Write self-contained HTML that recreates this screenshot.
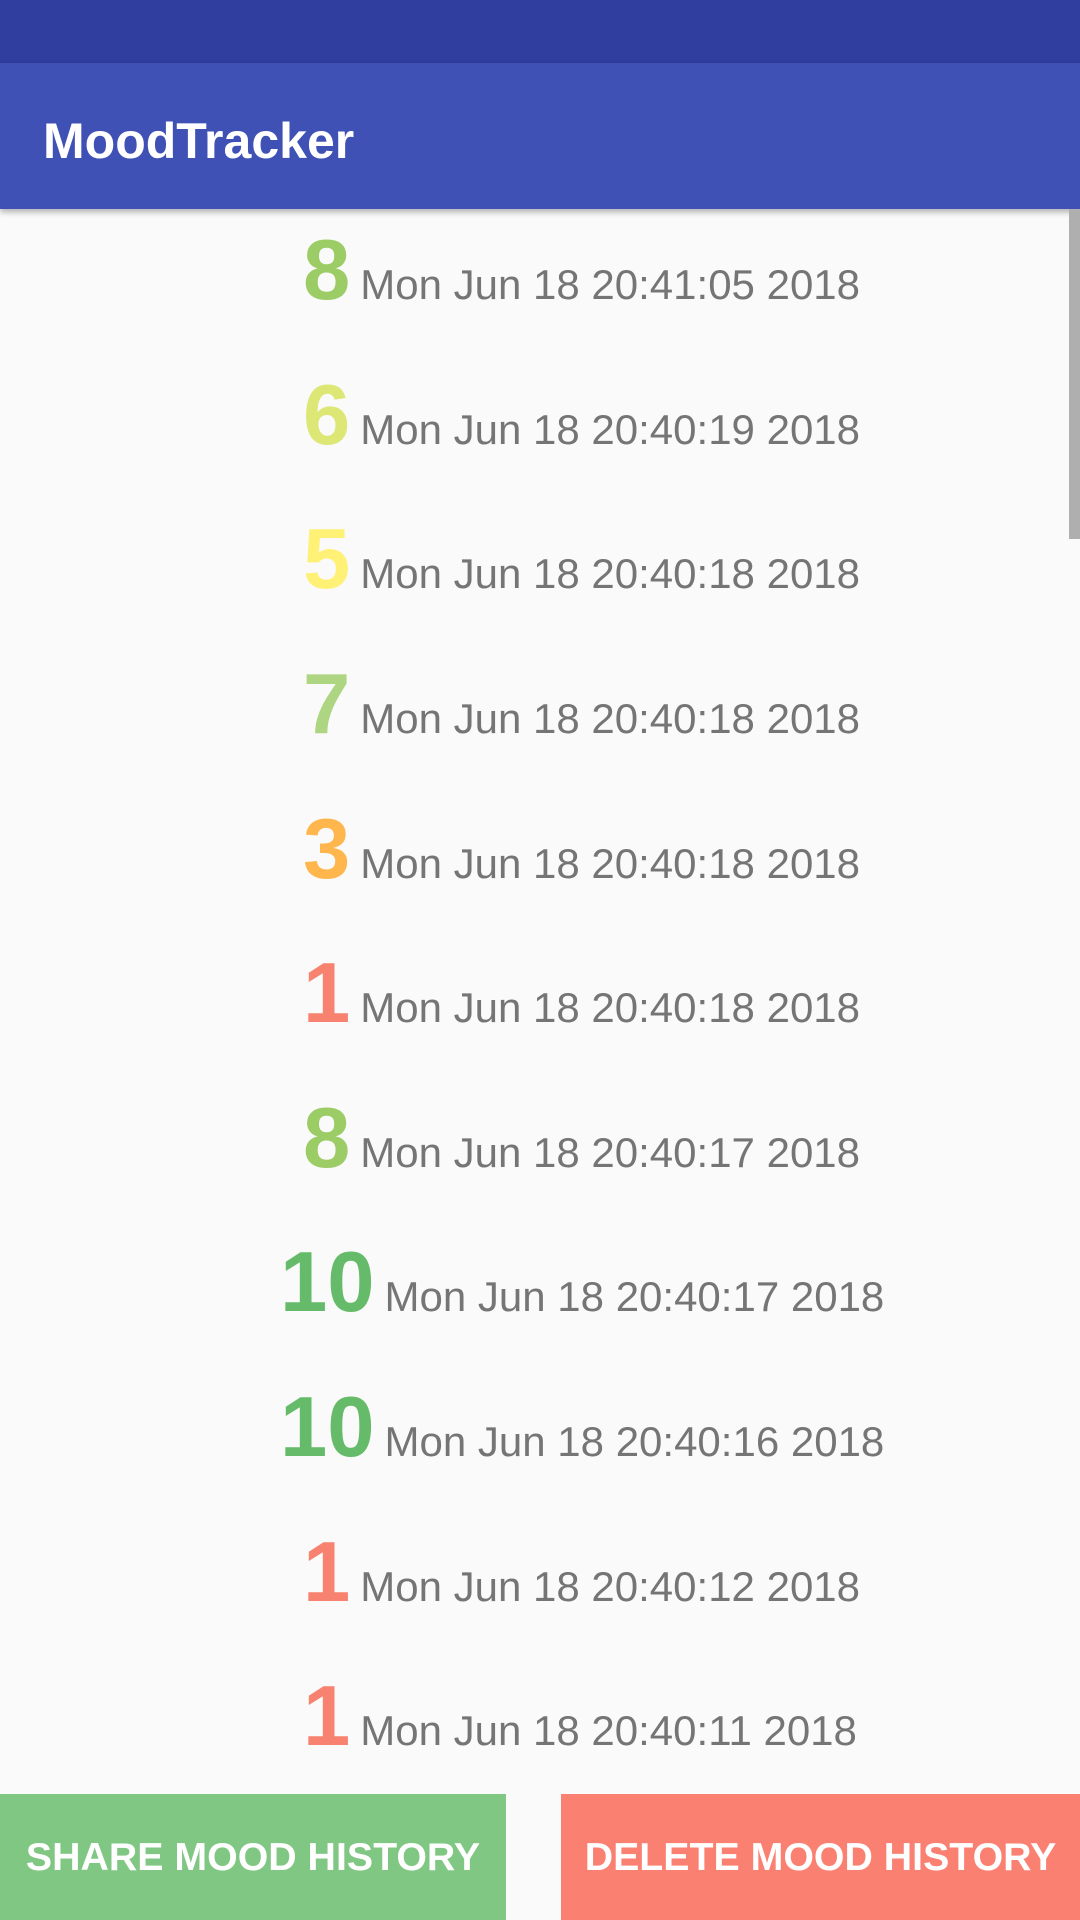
<!DOCTYPE html>
<html><head><meta charset="utf-8"><style>
body{margin:0;width:1080px;height:1920px;background:#FAFAFA;position:relative;overflow:hidden;font-family:"Liberation Sans",Roboto,sans-serif}
.sb{position:absolute;left:0;top:0;width:1080px;height:63px;background:#303F9F}
.ab{position:absolute;left:0;top:63px;width:1080px;height:146px;background:#3F51B5;box-shadow:0 3px 6px rgba(0,0,0,.3)}
.ab span{position:absolute;left:43px;top:53px;color:#fff;font-size:50px;font-weight:bold;line-height:1}
.row{position:absolute;display:flex;align-items:baseline;white-space:nowrap}
.n{font-weight:bold;font-size:85px;line-height:1;text-align:right}
.d{color:#757575;font-size:42px;margin-left:10px}
.scroll{position:absolute;left:1069px;top:209px;width:11px;height:330px;background:#AFAFAF}
.btn{position:absolute;top:1794px;height:126px;color:#fff;font-weight:bold;font-size:39.3px;display:flex;align-items:center;justify-content:center}
</style></head><body>
<div class="sb"></div>
<div class="ab"><span>MoodTracker</span></div>
<div class="scroll"></div>

<div class="row" style="left:303px;top:228px"><span class="n" style="color:#9CCC65">8</span><span class="d">Mon Jun 18 20:41:05 2018</span></div>
<div class="row" style="left:303px;top:373px"><span class="n" style="color:#DCE775">6</span><span class="d">Mon Jun 18 20:40:19 2018</span></div>
<div class="row" style="left:303px;top:517px"><span class="n" style="color:#FFF176">5</span><span class="d">Mon Jun 18 20:40:18 2018</span></div>
<div class="row" style="left:303px;top:662px"><span class="n" style="color:#AED581">7</span><span class="d">Mon Jun 18 20:40:18 2018</span></div>
<div class="row" style="left:303px;top:807px"><span class="n" style="color:#FFB74D">3</span><span class="d">Mon Jun 18 20:40:18 2018</span></div>
<div class="row" style="left:303px;top:951px"><span class="n" style="color:#F88270">1</span><span class="d">Mon Jun 18 20:40:18 2018</span></div>
<div class="row" style="left:303px;top:1096px"><span class="n" style="color:#9CCC65">8</span><span class="d">Mon Jun 18 20:40:17 2018</span></div>
<div class="row" style="left:280px;top:1240px"><span class="n" style="color:#66BB6A">10</span><span class="d">Mon Jun 18 20:40:17 2018</span></div>
<div class="row" style="left:280px;top:1385px"><span class="n" style="color:#66BB6A">10</span><span class="d">Mon Jun 18 20:40:16 2018</span></div>
<div class="row" style="left:303px;top:1530px"><span class="n" style="color:#F88270">1</span><span class="d">Mon Jun 18 20:40:12 2018</span></div>
<div class="row" style="left:303px;top:1674px"><span class="n" style="color:#F88270">1</span><span class="d">Mon Jun 18 20:40:11 2018</span></div>

<div class="btn" style="left:0;width:506px;background:#81C784">SHARE MOOD HISTORY</div>
<div class="btn" style="left:561px;width:519px;background:#FA8072">DELETE MOOD HISTORY</div>
</body></html>
